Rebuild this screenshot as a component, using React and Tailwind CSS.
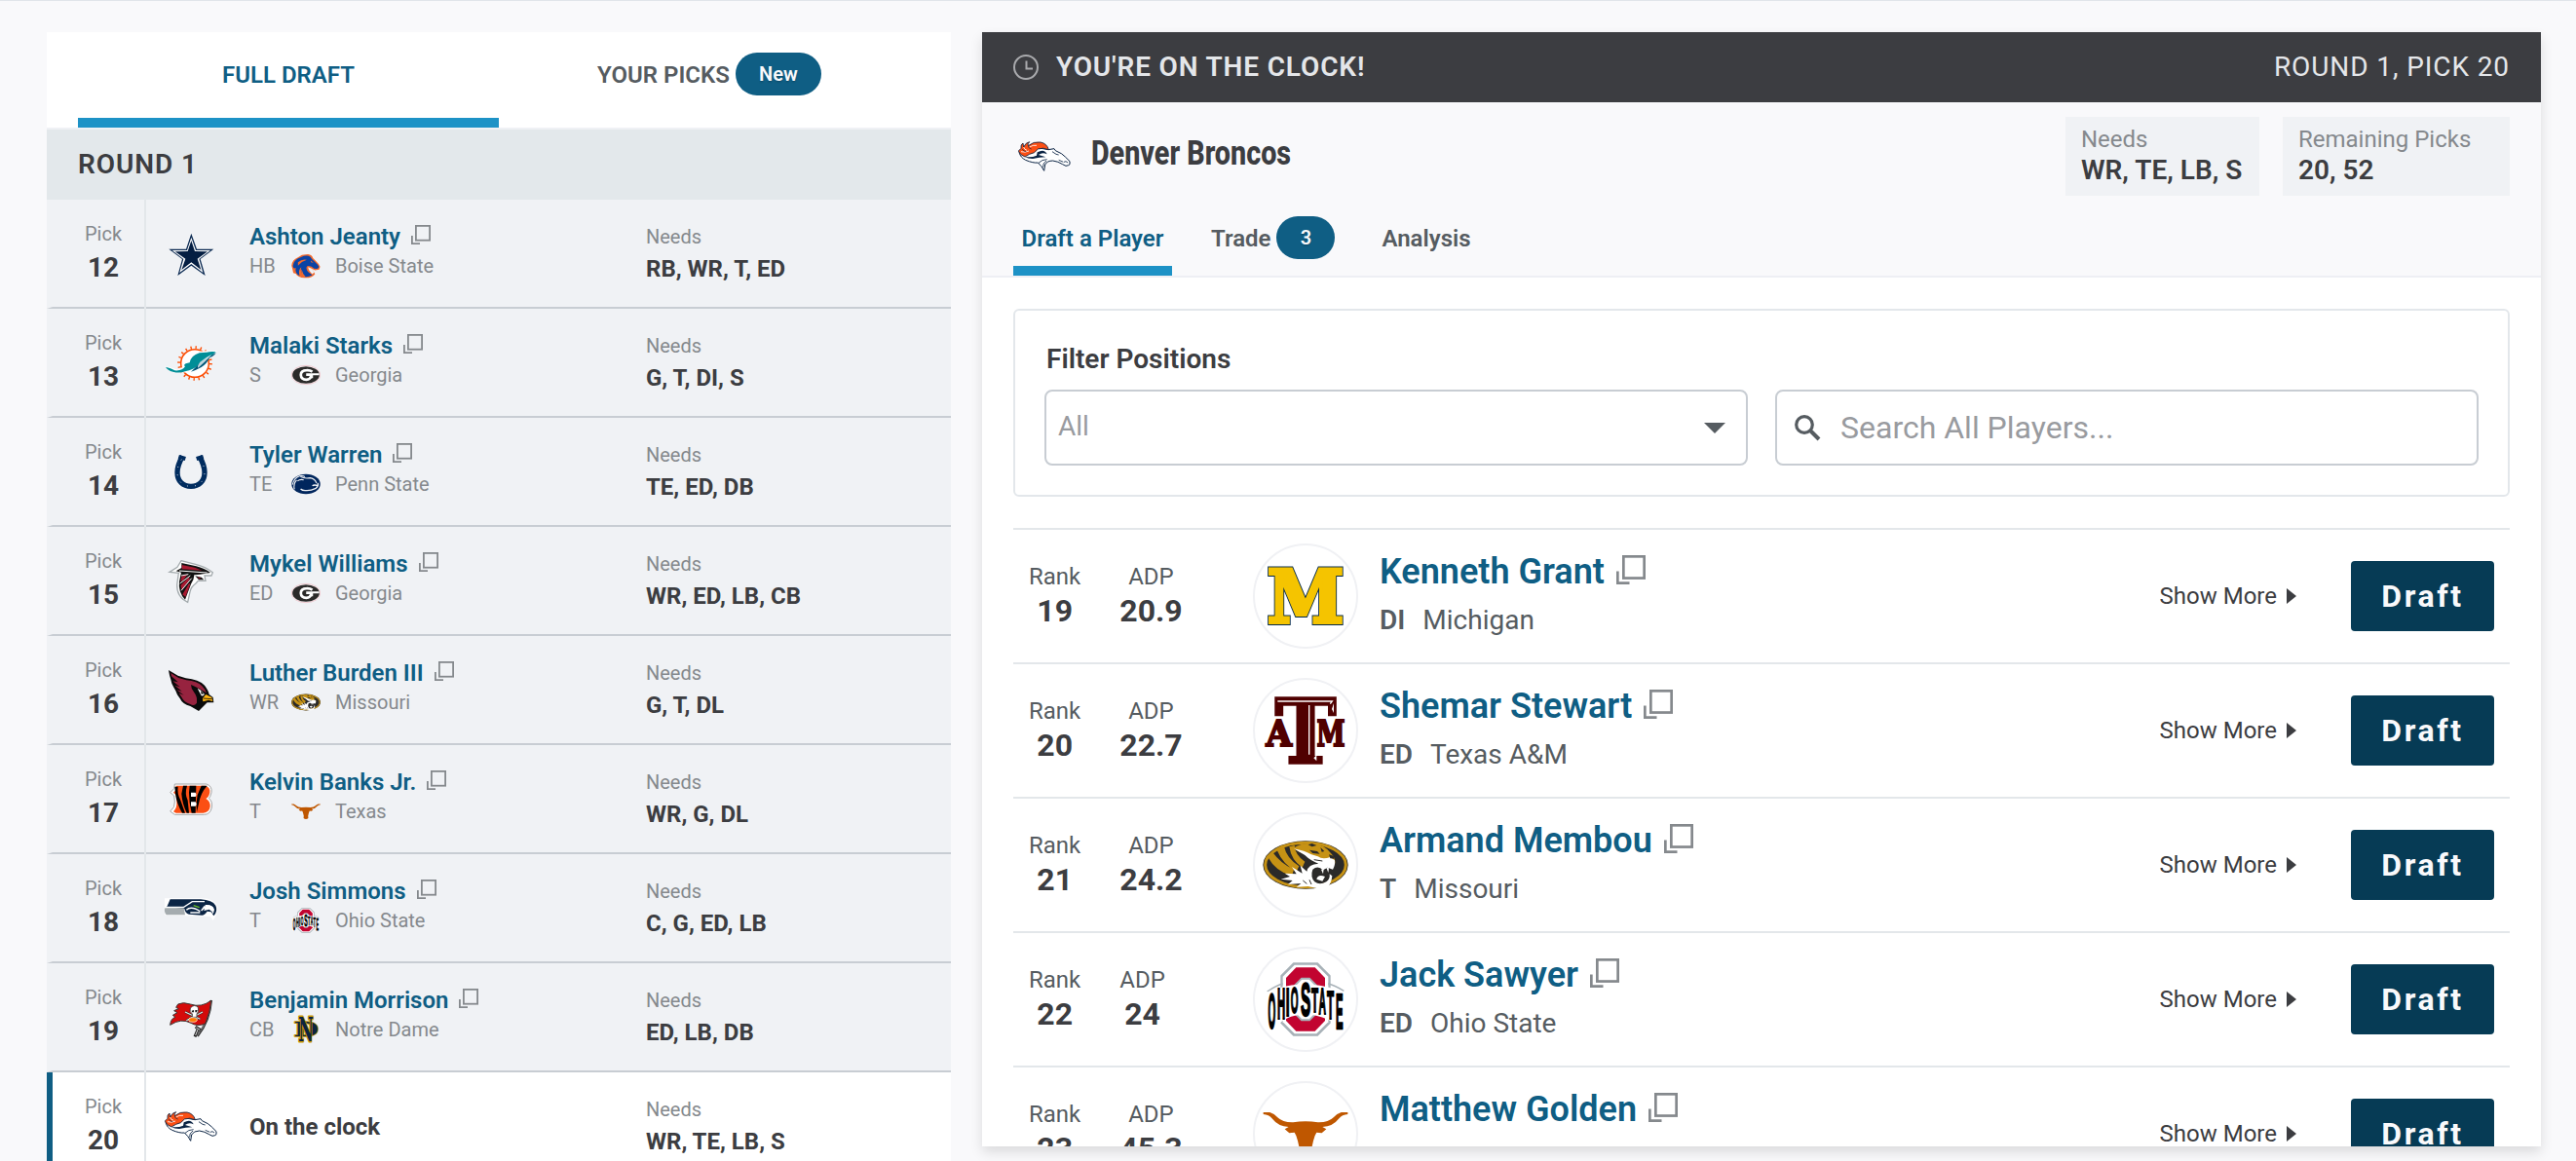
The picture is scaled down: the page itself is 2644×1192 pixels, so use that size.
import { useState } from 'react';

const CENTER = 'middle';

/* ---------- NFL logos, all on a 168 x 168 canvas ---------- */

function Cowboys() {
  return (
    <g>
      <polygon fill="#0b2a52" points="85,20 102,68 154,68 113,99 128,150 85,119 43,150 57,99 16,68 69,68" />
      <polygon fill="#fff" points="85,32 99,72 144,72 109,99 121,141 85,114 49,141 61,99 26,72 72,72" />
      <polygon fill="#041e42" points="85,42 96,75 135,76 104,98 115,132 85,109 55,132 67,98 35,76 74,75" />
    </g>
  );
}

function Dolphins() {
  return (
    <g>
      <circle cx="96" cy="84" r="49" fill="none" stroke="#fc4c02" strokeWidth="9" strokeDasharray="4 11.4" />
      <circle cx="96" cy="84" r="43" fill="#fff" stroke="#fc4c02" strokeWidth="4.5" />
      <path fill="#fff" d="M3 92 Q24 96 44 104 Q58 98 66 88 Q78 56 108 47 Q136 44 164 45 Q158 60 146 64 Q136 76 124 84 Q116 96 100 104 Q70 116 30 112 Q12 106 3 92Z" />
      <path fill="#008e97" d="M6 95 Q22 98 34 106 Q58 108 66 94 Q60 90 68 85 L80 82 Q84 60 110 52 L132 50 Q146 47 161 49 Q150 61 134 67 Q128 80 110 88 Q92 104 66 109 Q50 116 28 110 Q12 106 6 95Z" />
      <path fill="#005778" d="M161 51 Q156 62 142 66 Q134 84 116 96 Q98 106 84 110 Q104 92 112 82 Q136 66 161 51Z" />
      <path fill="#fff" d="M112 80 Q132 64 148 56 Q138 68 128 78 L106 98 Q102 94 112 80Z" opacity=".75" />
    </g>
  );
}

function Colts() {
  return (
    <g fill="none">
      <path stroke="#002c5f" strokeWidth="16" d="M58 34 C48 52 42 64 42 84 C42 112 60 127 84 127 C108 127 126 112 126 84 C126 64 120 52 110 34" />
      <path stroke="#002c5f" strokeWidth="13" d="M46 36 L67 42 M122 36 L101 42" />
      <path stroke="#f0f2f5" strokeWidth="3" strokeDasharray="2.5 22" d="M55 44 C47 58 42 68 42 84 C42 112 60 127 84 127 C108 127 126 112 126 84 C126 68 121 58 113 44" />
    </g>
  );
}

function Falcons() {
  return (
    <g>
      <path fill="#fff" stroke="#a5acaf" strokeWidth="4" d="M54 20 L98 31 Q128 38 151 56 L147 66 L126 66 L129 82 L106 82 L99 90 Q84 100 81 116 L74 148 Q40 132 41 94 L46 58 L18 55 L42 40Z" />
      <path fill="#111" d="M55 27 L100 37 Q126 43 144 57 L112 62 L94 64 Q94 78 84 92 L66 140 Q44 118 48 84 L54 56 L38 52 L55 42Z" />
      <path fill="#a71930" d="M56 33 L96 41 L118 50 L56 46Z M52 96 L78 70 L80 78 L56 110Z M55 68 L74 62 L60 80 L52 84Z M58 124 L78 90 L82 92 L67 132Z" />
      <path stroke="#fff" strokeWidth="3" d="M48 51 L134 57 M54 66 L76 62 M50 90 L82 66 M54 112 L86 74" />
      <path fill="#111" d="M97 67 L116 71 L124 79 L108 79Z" />
      <path fill="#a71930" d="M104 70 L115 74 L108 76Z" />
    </g>
  );
}

function Cardinals() {
  return (
    <g>
      <path fill="#0a0a0a" d="M15 21 L44 38 L68 46 Q108 50 126 68 Q138 84 140 96 L152 105 L154 121 L134 121 L108 147 L82 132 Q58 126 50 108 L42 97 L37 85 L31 74 L25 62 L22 50 L18 37Z" />
      <path fill="#97233f" d="M22 30 L46 45 L70 52 Q104 55 118 70 Q128 80 132 92 Q116 80 84 66 Q84 78 94 90 Q104 102 102 122 Q94 134 82 126 Q62 120 56 106 L47 92 L62 98 L40 82 L56 86 L34 68 L50 73 L28 55 L44 58 L24 40Z" />
      <path fill="#fff" d="M104 77 Q116 82 125 94 Q126 102 116 100 L112 92Z" />
      <path fill="#0a0a0a" d="M114 84 L124 94 L116 95Z" />
      <path fill="#ffb612" d="M130 96 L148 105 L151 117 L138 113 L121 118 L120 108Z" />
      <path stroke="#0a0a0a" strokeWidth="2.5" d="M122 108 L149 110" />
    </g>
  );
}

function Bengals() {
  return (
    <g>
      <path fill="#fff" stroke="#a5a5a5" strokeWidth="3" d="M34 36 H132 Q150 42 147 62 Q143 78 139 80 Q151 88 148 108 Q144 130 124 130 H34 L20 120 Q36 108 34 90 L32 72 L20 62 L32 50Z" />
      <path fill="#fb4f14" d="M38 41 H128 Q144 46 142 62 Q139 76 130 81 Q144 88 143 106 Q140 124 122 125 H38 L30 121 Q42 108 40 90 L38 70 L30 62 L38 54Z" />
      <path fill="#000" d="M34 44 H44 Q41 66 52 86 L66 125 H57 Q40 96 36 66Z M60 41 H72 Q64 66 74 86 L78 125 H71 Q57 96 55 66Z M80 41 H100 L98 125 H86 Q78 94 78 62Z M116 41 H134 Q114 62 108 96 L102 122 Q98 96 104 70Z" />
      <path fill="#fff" d="M84 62 H98 Q103 68 98 75 H84Z M84 91 H98 Q104 98 98 104 H84Z" />
    </g>
  );
}

function Seahawks() {
  return (
    <g>
      <path fill="#fff" d="M3 52 H118 Q156 52 166 78 Q168 98 152 120 L144 108 L70 106 L4 104Z" />
      <path fill="#0b2545" d="M20 55 H114 Q150 57 160 74 Q168 90 154 106 L146 94 L134 92 Q126 104 118 104 L78 101 Q66 98 64 84 L10 78Z" />
      <path fill="#a5acaf" d="M4 82 H62 L66 103 H8 Q0 92 4 82Z" />
      <path stroke="#fff" strokeWidth="4" fill="none" d="M12 79 H62 L88 62 H126 M70 88 Q84 74 112 92 M82 96 H112 M126 76 L116 90 Q134 68 150 80 Q156 90 150 98" />
      <path fill="#fff" d="M128 72 Q152 70 156 88 L150 94 L140 86 L124 90Z" />
      <path stroke="#69be28" strokeWidth="4" d="M92 74 L110 80" />
    </g>
  );
}

function Buccaneers() {
  return (
    <g>
      <path stroke="#333" strokeWidth="8" d="M146 30 Q142 92 104 140" fill="none" />
      <path stroke="#bbb" strokeWidth="2" d="M146 34 Q140 92 104 138" fill="none" />
      <path fill="#d50a0a" stroke="#3a3634" strokeWidth="3" d="M38 52 L44 42 Q60 34 82 42 Q116 54 147 30 Q142 70 128 102 Q104 112 84 100 Q54 84 20 106 Q22 86 36 82 L28 76 L42 68 L32 62 L46 56Z" />
      <path stroke="#333" strokeWidth="7" d="M66 66 L112 88 M120 66 L70 92" />
      <path stroke="#e3e3e3" strokeWidth="3.5" d="M66 66 L112 88 M120 66 L70 92" />
      <path fill="#fff" stroke="#333" strokeWidth="2.5" d="M82 54 Q94 40 106 52 Q110 66 102 72 V82 H88 V72 Q78 66 82 54Z" />
      <path fill="#222" d="M86 62 L93 60 L93 67 L87 67Z M97 60 L104 60 L102 67 L97 67Z" />
      <ellipse cx="90" cy="90" rx="13" ry="7" fill="#ff7900" stroke="#fff" strokeWidth="2" />
      <path stroke="#222" strokeWidth="9" d="M98 112 L114 122 M106 118 L96 142" />
      <path stroke="#fff" strokeWidth="2.5" d="M100 114 L112 121 M105 120 L98 138" />
    </g>
  );
}

function Broncos() {
  return (
    <g>
      <path fill="#fff" stroke="#0a2343" strokeWidth="3" d="M6 70 Q28 72 48 60 Q72 54 96 62 L114 59 L118 65 Q140 74 148 84 L162 98 Q164 110 158 110 L150 112 L140 107 Q126 98 110 96 Q92 96 86 108 L83 127 Q76 112 64 102 Q50 104 26 94 Q10 86 6 70Z" />
      <path fill="#fb4f14" stroke="#0a2343" strokeWidth="2.5" d="M4 66 L12 58 Q10 46 18 42 L20 54 Q26 40 38 38 Q31 44 34 50 Q50 36 72 39 Q92 43 97 62 Q80 54 64 60 Q54 74 38 76 L24 84 Q8 78 4 66Z" />
      <path fill="none" stroke="#fff" strokeWidth="2.5" d="M20 54 Q22 62 30 64 M38 54 Q48 47 60 49 M12 68 Q24 72 36 66" />
      <path fill="none" stroke="#0a2343" strokeWidth="2" d="M34 50 Q34 58 44 60 M16 60 Q20 68 28 68" />
      <path fill="#0a2343" d="M62 70 Q84 58 92 76 Q78 68 66 78 L88 85 Q68 86 48 90 Q32 90 24 84 Q46 86 60 80Z" />
      <path fill="none" stroke="#0a2343" strokeWidth="2.5" d="M66 103 Q76 92 92 92 M80 116 Q78 104 90 96 M108 68 L120 76 L128 78 M144 100 L150 98 L156 102 M128 94 L142 100" />
    </g>
  );
}

const NFL_LOGOS = {
  cowboys: Cowboys,
  dolphins: Dolphins,
  colts: Colts,
  falcons: Falcons,
  cardinals: Cardinals,
  bengals: Bengals,
  seahawks: Seahawks,
  buccaneers: Buccaneers,
  broncos: Broncos,
};

function TeamLogo({ team }) {
  const Art = NFL_LOGOS[team];
  return (
    <svg viewBox="0 0 168 168" className="w-14 h-14 shrink-0">
      <Art />
    </svg>
  );
}

/* ---------- College logos, all on a 264 x 264 canvas ---------- */

function Letter({ x, y, sx = 1, sy = 1, children, ...rest }) {
  return (
    <text transform={`translate(${x} ${y}) scale(${sx} ${sy})`} textAnchor={CENTER} fontSize="100" fontWeight="700" {...rest}>
      {children}
    </text>
  );
}

const SLAB = '"DejaVu Serif", serif';
const BLOCK = '"Liberation Sans", sans-serif';

function Boise() {
  return (
    <g>
      <path fill="#f26a2e" d="M96 34 L150 26 Q188 30 196 62 L222 88 Q246 110 260 138 L252 166 L214 172 Q190 160 170 150 Q206 176 214 206 Q180 246 118 240 Q60 236 40 202 L18 196 L10 158 L2 130 Q8 76 60 56Z" />
      <path fill="#0a43a5" d="M88 52 Q140 28 172 50 Q184 74 216 98 Q240 118 250 142 L234 158 L206 156 Q176 126 144 134 Q126 150 150 184 L190 216 Q140 238 118 228 Q76 190 90 142 Q60 168 74 222 Q32 200 40 150 Q20 162 14 134 Q20 76 88 52Z" />
      <path fill="#f26a2e" d="M60 100 Q100 66 140 78 Q96 90 60 130Z M176 84 L200 104 L178 100Z M92 160 Q100 200 130 230 L108 228 Q84 200 92 160Z" />
      <path fill="#f0f2f5" d="M152 144 Q190 156 206 190 L190 206 Q156 180 152 144Z" />
    </g>
  );
}

function Georgia() {
  return (
    <g>
      <ellipse cx="132" cy="132" rx="130" ry="85" fill="#fff" stroke="#e8a3ad" strokeWidth="5" />
      <ellipse cx="132" cy="132" rx="122" ry="77" fill="#2b2a29" />
      <path fill="none" stroke="#fff" strokeWidth="24" d="M190 102 Q168 88 138 90 Q86 92 86 132 Q88 174 136 174 Q172 172 176 146" />
      <path fill="#fff" d="M134 116 H252 V135 H196 V160 H166 V140 H134Z" />
    </g>
  );
}

function PennState() {
  return (
    <g>
      <ellipse cx="132" cy="132" rx="130" ry="90" fill="#00265d" />
      <path fill="none" stroke="#f0f2f5" strokeWidth="10" d="M10 138 Q26 76 74 60 Q104 52 122 66 M28 180 Q16 130 48 96 M82 64 Q118 86 172 76 Q216 84 228 124 M56 104 Q78 86 112 94" />
      <path fill="none" stroke="#f0f2f5" strokeWidth="12" d="M240 122 Q248 150 222 170 Q176 192 134 190 Q104 194 84 176 M236 146 Q208 134 190 148" />
    </g>
  );
}

function Missouri() {
  return (
    <g>
      <ellipse cx="132" cy="132" rx="131" ry="74" fill="#2b2a29" />
      <ellipse cx="132" cy="132" rx="124" ry="68" fill="none" stroke="#c69214" strokeWidth="9" />
      <path fill="#c69214" d="M16 108 L30 92 Q56 128 96 146 L90 166 Q40 152 16 108Z M44 86 L66 76 Q74 112 112 136 L104 152 Q62 130 44 86Z M82 76 L98 72 Q100 102 130 122 L122 140 Q88 118 82 76Z" />
      <path fill="#c69214" d="M94 80 Q116 64 152 66 Q190 68 212 98 Q226 112 222 130 L206 116 Q170 116 150 104 Q118 98 94 80Z" />
      <path fill="#2b2a29" d="M140 70 L152 66 L166 72 L152 76Z M144 86 L168 90 L176 98 L154 96Z M178 78 L190 90 L182 92Z" />
      <path fill="#fff" d="M96 82 Q130 88 150 100 L170 106 Q184 116 208 108 L222 118 Q224 134 216 146 L200 140 L186 148 Q170 132 154 146 Q146 168 160 184 Q176 196 196 184 Q208 176 206 160 L214 166 Q212 190 198 202 L170 205 L140 198 L104 200 L118 189 L78 192 L92 180 L56 176 L84 168 L68 158 L104 160 L90 138 L122 158 L116 134 L136 152 Q140 130 172 128 Q146 118 130 102Z" />
      <path fill="#2b2a29" d="M204 100 L218 104 L221 113 L208 112Z" />
      <path fill="#fff" d="M180 146 L188 145 L186 160Z M196 140 L204 142 L202 156Z M166 176 Q170 160 192 168 L184 182Z" />
      <path stroke="#2b2a29" strokeWidth="3" d="M158 116 L184 120 M124 180 L136 190 M144 178 L150 192" />
    </g>
  );
}

function Texas() {
  return (
    <path
      fill="#bf5700"
      d="M2 66 L22 66 Q36 70 46 82 Q62 98 94 97 Q132 91 170 97 Q202 98 218 82 Q228 70 242 66 L262 66 L262 72 Q244 74 236 84 Q216 110 184 111 L196 118 L182 130 L166 128 Q160 136 156 154 L151 176 Q157 186 151 196 Q144 203 132 203 Q120 203 113 196 Q107 186 113 176 L108 154 Q104 136 98 128 L82 130 L68 118 L80 111 Q48 110 28 84 Q20 74 2 72Z"
    />
  );
}

const OHIO_LETTERS = [
  ['O', 28, 221, 0.3, 1.52],
  ['H', 57, 192, 0.34, 1.32],
  ['I', 77, 182, 0.42, 1.2],
  ['O', 98, 174, 0.3, 1.12],
  ['S', 132, 183, 0.46, 1.45],
  ['T', 161, 172, 0.35, 1.08],
  ['A', 184, 178, 0.31, 1.12],
  ['T', 209, 191, 0.35, 1.22],
  ['E', 236, 222, 0.34, 1.48],
];

function OhioState() {
  return (
    <g>
      <polygon points="98,28 166,28 200,62 200,202 166,236 98,236 64,202 64,62" fill="none" stroke="#a7b1b7" strokeWidth="18" />
      <polygon points="98,26 166,26 202,62 202,202 166,238 98,238 62,202 62,62" fill="#fff" />
      <polygon points="103,34 161,34 192,66 192,198 161,230 103,230 72,198 72,66" fill="#c20430" />
      <polygon points="120,68 144,68 164,88 164,176 144,196 120,196 100,176 100,88" fill="#fff" stroke="#a7b1b7" strokeWidth="6" />
      <path fill="#fff" stroke="#a7b1b7" strokeWidth="4" d="M14 108 Q44 88 62 84" />
      <path fill="none" stroke="#a7b1b7" strokeWidth="4" d="M202 84 Q220 88 250 106" />
      <path fill="#fff" d="M12 112 Q60 88 112 86 Q132 68 152 86 Q204 90 252 112 V232 Q230 206 200 194 Q170 182 152 180 Q132 200 112 180 Q60 186 34 228 H12Z" />
      {OHIO_LETTERS.map(([char, x, y, sx, sy]) => (
        <Letter key={x} x={x} y={y} sx={sx} sy={sy} fontFamily={BLOCK} fill="#000" stroke="#000" strokeWidth="5">
          {char}
        </Letter>
      ))}
    </g>
  );
}

function NotreDame() {
  return (
    <g fontFamily={SLAB} strokeLinejoin="round">
      <Letter x={134} y={196} sx={2.6} sy={1.8} fill="#0c2340" stroke="#c99700" strokeWidth="7" style={{ paintOrder: 'stroke' }}>D</Letter>
      <Letter x={132} y={238} sx={1.5} sy={2.9} fill="#0c2340" stroke="#c99700" strokeWidth="9" style={{ paintOrder: 'stroke' }}>N</Letter>
    </g>
  );
}

function Michigan() {
  return (
    <g fontFamily={SLAB} fill="#f5c400">
      <Letter x={132} y={214} sx={2.12} sy={2.24} stroke="#00274c" strokeWidth="8">M</Letter>
      <Letter x={132} y={214} sx={2.12} sy={2.24} stroke="#f5c400" strokeWidth="5.5">M</Letter>
    </g>
  );
}

function TexasAM() {
  return (
    <g fontFamily={SLAB} fill="#500000" stroke="#500000">
      <Letter x={50} y={181} sx={1.02} sy={1.1} strokeWidth="6">A</Letter>
      <Letter x={209} y={181} sx={0.8} sy={1.1} strokeWidth="6">M</Letter>
      <Letter x={132} y={231} sx={2.5} sy={2.68} stroke="#fff" strokeWidth="9">T</Letter>
      <Letter x={132} y={231} sx={2.5} sy={2.68} strokeWidth="4">T</Letter>
      <path fill="none" stroke="#fff" strokeWidth="4" d="M46 42 H214 L208 50 M143 54 V206" />
      <path stroke="none" fill="#fff" d="M219 48 L213 66 L219 78Z M166 208 L157 217 L166 226Z" />
    </g>
  );
}

const COLLEGE_LOGOS = {
  'Boise State': Boise,
  Georgia,
  'Penn State': PennState,
  Missouri,
  Texas,
  'Ohio State': OhioState,
  'Notre Dame': NotreDame,
  Michigan,
  'Texas A&M': TexasAM,
};

function CollegeLogo({ college, className }) {
  const Art = COLLEGE_LOGOS[college];
  return (
    <svg viewBox="0 0 264 264" className={className}>
      <Art />
    </svg>
  );
}

/* ---------- Small icons ---------- */

function PopupIcon({ className }) {
  return (
    <svg viewBox="0 0 20 20" fill="none" stroke="#85898d" strokeWidth="1.8" className={className}>
      <rect x="4.9" y="0.9" width="14.2" height="14.8" />
      <path d="M0.9 11 V19.1 H9" />
    </svg>
  );
}

function ClockIcon() {
  return (
    <svg viewBox="0 0 26 26" fill="none" stroke="#a9aaad" strokeWidth="2" className="w-[26px] h-[26px]">
      <circle cx="13" cy="13" r="12" />
      <path d="M13.5 6.5 V14.5 H20" />
    </svg>
  );
}

function SearchIcon() {
  return (
    <svg viewBox="0 0 27 27" fill="none" stroke="#565c61" className="w-[27px] h-[27px]">
      <circle cx="10" cy="10" r="8.3" strokeWidth="3.2" />
      <path d="M16 16 L25 25" strokeWidth="4" />
    </svg>
  );
}

/* ---------- Data ---------- */

const PICKS = [
  { pick: 12, team: 'cowboys', name: 'Ashton Jeanty', pos: 'HB', college: 'Boise State', needs: 'RB, WR, T, ED' },
  { pick: 13, team: 'dolphins', name: 'Malaki Starks', pos: 'S', college: 'Georgia', needs: 'G, T, DI, S' },
  { pick: 14, team: 'colts', name: 'Tyler Warren', pos: 'TE', college: 'Penn State', needs: 'TE, ED, DB' },
  { pick: 15, team: 'falcons', name: 'Mykel Williams', pos: 'ED', college: 'Georgia', needs: 'WR, ED, LB, CB' },
  { pick: 16, team: 'cardinals', name: 'Luther Burden III', pos: 'WR', college: 'Missouri', needs: 'G, T, DL' },
  { pick: 17, team: 'bengals', name: 'Kelvin Banks Jr.', pos: 'T', college: 'Texas', needs: 'WR, G, DL' },
  { pick: 18, team: 'seahawks', name: 'Josh Simmons', pos: 'T', college: 'Ohio State', needs: 'C, G, ED, LB' },
  { pick: 19, team: 'buccaneers', name: 'Benjamin Morrison', pos: 'CB', college: 'Notre Dame', needs: 'ED, LB, DB' },
  { pick: 20, team: 'broncos', needs: 'WR, TE, LB, S' },
];

const PLAYERS = [
  { rank: 19, adp: '20.9', name: 'Kenneth Grant', pos: 'DI', college: 'Michigan' },
  { rank: 20, adp: '22.7', name: 'Shemar Stewart', pos: 'ED', college: 'Texas A&M' },
  { rank: 21, adp: '24.2', name: 'Armand Membou', pos: 'T', college: 'Missouri' },
  { rank: 22, adp: '24', name: 'Jack Sawyer', pos: 'ED', college: 'Ohio State' },
  { rank: 23, adp: '45.3', name: 'Matthew Golden', pos: 'WR', college: 'Texas' },
];

/* ---------- Left: draft board ---------- */

function PickRow({ row }) {
  const onClock = !row.name;
  return (
    <div className={`flex h-28 shrink-0 ${onClock ? 'bg-white' : 'bg-[#f0f2f5]'}`}>
      <div className={`w-[100px] shrink-0 border-l-[6px] pl-2.5 pt-[23px] text-center border-b-2 border-b-[#c8cdd3] ${onClock ? 'border-l-[#0f5e84]' : 'border-l-transparent'}`}>
        <p className="text-xl leading-6 text-[#85898d]">Pick</p>
        <p className="mt-[5px] text-[28px] leading-9 font-bold text-[#3c3d41]">{row.pick}</p>
      </div>
      <div className="w-0.5 shrink-0 bg-[#e3e7ea]" />
      <div className="flex flex-1 border-b-2 border-b-[#c8cdd3] pl-[18px]">
        <div className="pt-7">
          <TeamLogo team={row.team} />
        </div>
        <div className="w-[439px] shrink-0 pl-8 pt-6">
          {onClock ? (
            <p className="mt-[18px] text-2xl leading-7 font-bold text-[#3c3d41]">On the clock</p>
          ) : (
            <>
              <div className="flex gap-[11px]">
                <span className="text-2xl leading-7 font-semibold text-[#0f5e84]">{row.name}</span>
                <PopupIcon className="w-5 h-5 mt-0.5" />
              </div>
              <div className="mt-0.5 flex items-center h-7 text-xl leading-7 text-[#85898d]">
                <span className="w-[43px]">{row.pos}</span>
                <CollegeLogo college={row.college} className="w-[30px] h-[30px]" />
                <span className="ml-[15px]">{row.college}</span>
              </div>
            </>
          )}
        </div>
        <div className="pt-[26px]">
          <p className="text-xl leading-6 text-[#85898d]">Needs</p>
          <p className="mt-[7px] text-2xl leading-7 font-bold whitespace-nowrap text-[#3c3d41]">{row.needs}</p>
        </div>
      </div>
    </div>
  );
}

function DraftBoard() {
  const [tab, setTab] = useState('full');
  const tabClass = (active) =>
    `w-[432px] h-[98px] flex items-center justify-center gap-1.5 border-b-[10px] text-2xl font-semibold ${
      active ? 'border-[#1d92c6] text-[#0f5e84]' : 'border-transparent text-[#565c61]'
    }`;
  return (
    <div className="w-[928px] shrink-0 flex flex-col">
      <div className="flex bg-white px-8 border-b-2 border-[#eff1f5] box-content h-[98px] w-[864px]">
        <button className={tabClass(tab === 'full')} onClick={() => setTab('full')}>FULL DRAFT</button>
        <button className={tabClass(tab === 'yours')} onClick={() => setTab('yours')}>
          YOUR PICKS
          <span className="w-[88px] h-11 -mt-0.5 rounded-full bg-[#0f5e84] text-xl leading-[44px] text-[#f9f9fb] text-shadow-sm">New</span>
        </button>
      </div>
      <h2 className="h-[72px] shrink-0 bg-[#e3e8eb] px-8 text-[28px] leading-[72px] font-semibold tracking-[0.9px] text-[#3c3d41]">ROUND 1</h2>
      {PICKS.map((row) => <PickRow key={row.pick} row={row} />)}
    </div>
  );
}

/* ---------- Right: on the clock panel ---------- */

function PlayerRow({ player }) {
  return (
    <div className="flex h-[138px] shrink-0 border-t-2 border-[#e3e7ea]">
      <div className="flex w-[246px] gap-10 pl-4 pt-8 text-center">
        <div>
          <p className="text-2xl leading-8 text-[#565c61]">Rank</p>
          <p className="text-[32px] leading-[38px] font-bold text-[#3c3d41]">{player.rank}</p>
        </div>
        <div>
          <p className="text-2xl leading-8 text-[#565c61]">ADP</p>
          <p className="text-[32px] leading-[38px] font-bold text-[#3c3d41]">{player.adp}</p>
        </div>
      </div>
      <div className="mt-3.5 w-[108px] h-[108px] shrink-0 rounded-full border-2 border-[#f0f1f4] flex items-center justify-center">
        <CollegeLogo college={player.college} className="w-[88px] h-[88px]" />
      </div>
      <div className="flex-1 pl-[22px] pt-[22px]">
        <div className="flex gap-3">
          <span className="text-4xl leading-[42px] font-semibold text-[#0f5e84]">{player.name}</span>
          <PopupIcon className="w-[30px] h-[30px] mt-1" />
        </div>
        <div className="mt-3 flex gap-[18px] text-[28px] leading-[34px] text-[#565c61]">
          <span className="font-semibold">{player.pos}</span>
          <span>{player.college}</span>
        </div>
      </div>
      <div className="flex items-center pr-4">
        <button className="flex items-center gap-2.5 text-2xl text-[#3c3d41]">
          Show More
          <svg viewBox="0 0 10 16" className="w-2.5 h-4">
            <path d="M0 0 L10 8 L0 16Z" fill="#3c3d41" />
          </svg>
        </button>
        <button className="ml-14 w-[147px] h-[72px] rounded bg-[#063b55] text-[32px] font-bold tracking-[2.6px] text-[#f9f9fb]">Draft</button>
      </div>
    </div>
  );
}

function StatBox({ label, value, className }) {
  return (
    <div className={`h-[81px] bg-[#f0f2f5] px-4 pt-[9px] ${className}`}>
      <p className="text-2xl leading-7 text-[#85898d]">{label}</p>
      <p className="mt-px text-[28px] leading-[34px] font-semibold text-[#3c3d41]">{value}</p>
    </div>
  );
}

const TABS = [
  { id: 'draft', label: 'Draft a Player', className: 'w-[163px]' },
  { id: 'trade', label: 'Trade', count: 3, className: 'ml-10 gap-1.5' },
  { id: 'analysis', label: 'Analysis', className: 'ml-12' },
];

function ClockPanel() {
  const [tab, setTab] = useState('draft');
  return (
    <div className="w-[1600px] h-[1144px] shrink-0 flex flex-col overflow-hidden bg-white shadow-[0_6px_12px_rgba(0,0,0,0.12)]">
      <div className="h-[72px] shrink-0 flex items-center bg-[#3c3d41] px-8 text-[28px] text-[#e4e6e9]">
        <ClockIcon />
        <span className="ml-[18px] font-semibold tracking-[0.85px]">YOU'RE ON THE CLOCK!</span>
        <span className="ml-auto tracking-[0.9px]">ROUND 1, PICK 20</span>
      </div>

      <div className="h-[180px] shrink-0 flex flex-col justify-between border-b-2 border-[#eeeff4] bg-[#f9f9fb] px-8">
        <div className="flex">
          <div className="pt-7 pl-1">
            <TeamLogo team="broncos" />
          </div>
          <h1 className="mt-8 ml-5 origin-left scale-x-[0.82] text-[35px] leading-[42px] font-extrabold text-[#3c3d41]">Denver Broncos</h1>
          <div className="ml-auto mt-[15px] flex gap-6">
            <StatBox label="Needs" value="WR, TE, LB, S" className="w-[199px]" />
            <StatBox label="Remaining Picks" value="20, 52" className="w-[233px]" />
          </div>
        </div>
        <div className="flex h-[68px]">
          {TABS.map((t) => (
            <button
              key={t.id}
              onClick={() => setTab(t.id)}
              className={`flex items-center justify-center border-b-[10px] pt-0.5 text-2xl font-semibold ${t.className} ${
                tab === t.id ? 'border-[#1d92c6] text-[#0f5e84]' : 'border-transparent text-[#565c61]'
              }`}
            >
              {t.label}
              {t.count && (
                <span className="w-[60px] h-11 -mt-0.5 rounded-full bg-[#0f5e84] text-xl leading-[44px] text-[#f9f9fb] text-shadow-sm">{t.count}</span>
              )}
            </button>
          ))}
        </div>
      </div>

      <div className="flex flex-col px-8 pt-8">
        <div className="h-[193px] shrink-0 rounded-md border-2 border-[#e3e7eb] px-[30px] pt-[33px]">
          <p className="ml-0.5 text-[28px] leading-[34px] font-semibold text-[#3c3d41]">Filter Positions</p>
          <div className="mt-3.5 flex gap-7">
            <div className="flex w-[722px] h-[78px] items-center justify-between rounded-lg border-2 border-[#c8cdd3] pl-3 pr-[21px]">
              <span className="-mt-0.5 text-[28px] text-[#999b9f]">All</span>
              <svg viewBox="0 0 22 11" className="w-[22px] h-[11px]">
                <path d="M0 0 H22 L11 11Z" fill="#565c61" />
              </svg>
            </div>
            <div className="flex w-[722px] h-[78px] items-center rounded-lg border-2 border-[#c8cdd3] pl-[18px] gap-5">
              <SearchIcon />
              <input className="flex-1 outline-none text-[32px] placeholder:text-[#999b9f]" placeholder="Search All Players..." />
            </div>
          </div>
        </div>
        <div className="mt-8 flex flex-col">
          {PLAYERS.map((p) => <PlayerRow key={p.rank} player={p} />)}
        </div>
      </div>
    </div>
  );
}

export default function App() {
  return (
    <div className="flex items-start gap-8 w-[2644px] h-[1192px] overflow-hidden border-t border-[#e1e5ea] bg-[#f9f9fb] pl-12 pt-8 font-[Roboto,sans-serif]">
      <DraftBoard />
      <ClockPanel />
    </div>
  );
}
